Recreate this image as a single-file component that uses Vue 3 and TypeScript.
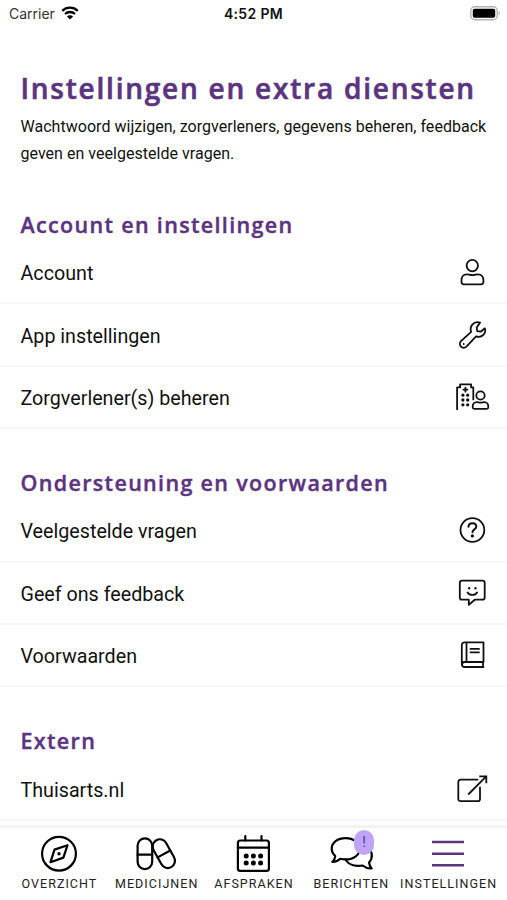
<script setup lang="ts">
interface Item {
  label: string
  icon: string
}
interface Section {
  title: string
  items: Item[]
}

const sections: Section[] = [
  {
    title: 'Account en instellingen',
    items: [
      { label: 'Account', icon: 'person' },
      { label: 'App instellingen', icon: 'wrench' },
      { label: 'Zorgverlener(s) beheren', icon: 'clinic' },
    ],
  },
  {
    title: 'Ondersteuning en voorwaarden',
    items: [
      { label: 'Veelgestelde vragen', icon: 'question' },
      { label: 'Geef ons feedback', icon: 'feedback' },
      { label: 'Voorwaarden', icon: 'book' },
    ],
  },
  {
    title: 'Extern',
    items: [{ label: 'Thuisarts.nl', icon: 'external' }],
  },
]

const tabs: Item[] = [
  { label: 'OVERZICHT', icon: 'compass' },
  { label: 'MEDICIJNEN', icon: 'pills' },
  { label: 'AFSPRAKEN', icon: 'calendar' },
  { label: 'BERICHTEN', icon: 'chat' },
  { label: 'INSTELLINGEN', icon: 'menu' },
]
</script>

<template>
  <div class="screen">
    <header class="status">
      <div class="carrier">
        <span>Carrier</span>
        <svg class="wifi" viewBox="0 0 18 14">
          <path d="M1.2 4.800a11.400 11.400 0 0 1 15.600 0M4 8a7.300 7.300 0 0 1 10 0" />
          <path class="solid" d="M9 13.600 5.900 10.500a4.400 4.400 0 0 1 6.200 0z" />
        </svg>
      </div>
      <div class="clock">4:52 PM</div>
      <svg class="battery" viewBox="0 0 31 15">
        <rect x="0.8" y="0.8" width="26.4" height="13" rx="4" fill="#fff" stroke="#b5b5b5" stroke-width="1.4" />
        <rect x="2.8" y="2.8" width="22.4" height="9" rx="1.8" fill="#000" />
        <path d="M28.600 5v4.600a2.600 2.600 0 0 0 0-4.600z" fill="#b5b5b5" />
      </svg>
    </header>

    <main class="content">
      <h1>Instellingen en extra diensten</h1>
      <p class="intro">
        Wachtwoord wijzigen, zorgverleners, gegevens beheren, feedback<br />geven en veelgestelde vragen.
      </p>

      <section v-for="section in sections" :key="section.title">
        <h2>{{ section.title }}</h2>
        <ul>
          <li v-for="item in section.items" :key="item.label">
            <span>{{ item.label }}</span>
            <svg class="icon" viewBox="-0.5 0 36 36">
              <g v-if="item.icon === 'person'">
                <circle cx="17.800" cy="11.600" r="5.700" />
                <path d="M12.200 20.300c2 0 3 .9 5.600.9s3.600-.9 5.600-.9c3.600 0 5.500 2.800 5.500 5.900v1.900a2.200 2.200 0 0 1-2.200 2.200H9.200A2.200 2.200 0 0 1 7 28.100V26.200c0-3.100 1.800-5.900 5.200-5.900z" />
              </g>
              <g v-else-if="item.icon === 'wrench'">
                <path d="M25.600 5.600c-3-1-6-.2-7.800 2-1.700 2-2 4.700-1.200 7.200L6.500 24.200c-1.500 1.500-1.500 3.900 0 5.400s3.900 1.500 5.400 0l9.700-10.200c2.300.8 4.900.4 6.800-1.200 2-1.700 2.800-4.400 2-6.900l-4.200 3.400-3.500-.6-.5-3.600z" />
                <path d="M9.200 26.900v.1" />
              </g>
              <g v-else-if="item.icon === 'clinic'">
                <path d="M2.600 30.300V8.400h3V5.300h11v3.100h2.200v12" />
                <path d="M10.900 8.700v4M8.900 10.700h4" />
                <path class="dots" d="M8.400 16.200v.01M13.200 16.200v.01M8.400 21v.01M13.200 21v.01M8.400 25.800v.01M13.200 25.800v.01" />
                <circle cx="26" cy="16.500" r="4.200" />
                <path d="M22.400 23.200c1.400 0 2 .5 3.600.5s2.200-.5 3.600-.5c2.600 0 4.200 2 4.200 4.200v.9c0 .9-.6 1.500-1.500 1.500H19.700c-.9 0-1.500-.6-1.500-1.500v-.9c0-2.200 1.600-4.200 4.200-4.200z" />
              </g>
              <g v-else-if="item.icon === 'question'">
                <circle cx="17.900" cy="18" r="11.900" />
                <path class="bold" d="M14 14.800c0-2.200 1.700-3.500 3.900-3.500s3.900 1.300 3.900 3.300c0 2.900-3.800 2.700-3.800 5.600" />
                <path class="dots" d="M17.900 23.900v.01" />
              </g>
              <g v-else-if="item.icon === 'feedback'">
                <path d="M7.500 5.700H28a2.200 2.200 0 0 1 2.200 2.200v14.600a2.200 2.200 0 0 1-2.200 2.200h-7.700l-6 5.100v-5.100H7.500a2.200 2.200 0 0 1-2.200-2.200V7.900a2.200 2.200 0 0 1 2.200-2.200z" />
                <path d="M13 17.400c2.200 3.400 7.400 3.400 9.600 0" />
                <path class="eyes" d="M14.700 13.200v.01M21 13.200v.01" />
              </g>
              <g v-else-if="item.icon === 'book'">
                <path d="M29 25V5.300H10A2.700 2.700 0 0 0 7.300 8v19.400M29 25H10a2.500 2.500 0 0 0 0 5h19M28.500 25v5M12 5.300V25" />
                <path d="M16 11.900h8.500M16 15.300h8.500" />
              </g>
              <g v-else>
                <path d="M23 8.700H6A2.200 2.200 0 0 0 3.800 10.900v17A2.200 2.200 0 0 0 6 30.100h17.300a2.200 2.200 0 0 0 2.200-2.200V16.500" />
                <path class="sharp" d="M13.700 23.500 31.500 5.600M24.800 5.400h7v6.800" />
              </g>
            </svg>
          </li>
        </ul>
      </section>
    </main>

    <nav class="tabs">
      <a v-for="tab in tabs" :key="tab.label" :class="['tab', tab.icon]">
        <svg viewBox="0 0 48 44">
          <g v-if="tab.icon === 'compass'">
            <circle cx="24" cy="21.700" r="16.900" />
            <path d="M32.500 13.200 19.500 17.600 15.500 30.200l12.900-4.600z" />
            <circle class="solid" cx="24" cy="21.700" r="1.700" />
          </g>
          <g v-else-if="tab.icon === 'pills'">
            <rect x="5.600" y="6.300" width="14.600" height="30.800" rx="7.300" />
            <path d="M5.600 22.700h14.600" />
            <g transform="rotate(-29 31.700 21.700)">
              <rect x="24.600" y="6.300" width="14.400" height="30.800" rx="7.200" />
              <path d="M24.600 22h14.400" />
            </g>
          </g>
          <g v-else-if="tab.icon === 'calendar'">
            <rect x="8.900" y="8.500" width="31" height="30.300" rx="2.400" />
            <path d="M8.900 15.700h31M16.300 4.200v4.300M32.500 4.200v4.300" />
            <path class="days" d="M17.200 24v.01M24.400 24v.01M31.600 24v.01M17.200 31v.01M24.400 31v.01M31.600 31v.01" />
          </g>
          <g v-else-if="tab.icon === 'chat'">
            <path d="M18.600 6.200C10.500 6.200 4.700 10.800 4.700 16.500c0 3 1.400 5.600 3.600 7.500-.2 2.400-1.300 4.300-3 5.800 3 .1 5.700-.7 7.900-3 1.700.5 3.500.6 5.400.6C26.600 27.400 33 22.600 33 16.800S26.600 6.200 18.600 6.200z" />
            <path d="M18.300 27.500c3.300 5.100 10.200 7.300 17.400 6 2.700 2.200 5.600 3.300 9 2.900-1.500-1.600-2.500-3.500-2.600-5.800 4-4.400 3.500-11-1-15" />
          </g>
          <g v-else>
            <path d="M8 10h32M8 21.700h32M8 33.200h32" />
          </g>
        </svg>
        <span v-if="tab.icon === 'chat'" class="badge">!</span>
        <span class="label">{{ tab.label }}</span>
      </a>
    </nav>
  </div>
</template>

<style>
body {
  margin: 0;
  background: #fff;
}
</style>

<style scoped>
.screen {
  display: flex;
  flex-direction: column;
  width: 507px;
  height: 900px;
  overflow: hidden;
  background: #fff;
  color: #111;
  font-family: Roboto, sans-serif;
}
.status {
  display: grid;
  grid-template-columns: 1fr auto 1fr;
  align-items: center;
  flex: none;
  height: 28px;
  padding: 0 6px 2px;
  box-sizing: border-box;
  font-family: Inter, sans-serif;
}
.carrier {
  display: flex;
  align-items: center;
  gap: 6px;
  padding-left: 3px;
  font-size: 14px;
  color: #333;
}
.wifi {
  width: 18px;
  height: 14px;
  fill: none;
  stroke: #000;
  stroke-width: 2.3;
}
.wifi .solid {
  fill: #000;
  stroke: none;
}
.clock {
  font-size: 14px;
  font-weight: 600;
  letter-spacing: 0.35px;
}
.battery {
  justify-self: end;
  width: 31px;
  height: 15px;
}
.content {
  flex: 1;
  min-height: 0;
  overflow: hidden;
}
h1,
h2 {
  margin: 0;
  color: #5b3480;
  font-family: "Open Sans", sans-serif;
  font-weight: 600;
  white-space: nowrap;
  stroke-linejoin: round;
  -webkit-text-stroke: 0.6px #5b3480;
}
h1 {
  padding: 41px 0 0 20.5px;
  font-size: 28px;
  line-height: 38px;
  letter-spacing: 1.77px;
}
.intro {
  margin: 6px 0 0;
  padding-left: 20.5px;
  font-size: 16px;
  line-height: 27px;
  letter-spacing: 0.03px;
  white-space: nowrap;
}
section {
  height: 258.2px;
}
h2 {
  padding: 42px 0 0 20.5px;
  font-size: 21.5px;
  line-height: 32px;
  letter-spacing: 1.33px;
  -webkit-text-stroke-width: 0.4px;
}
ul {
  margin: 0;
  padding: 1px 0 0;
  list-style: none;
}
li {
  display: flex;
  align-items: center;
  justify-content: space-between;
  box-sizing: border-box;
  height: 62.4px;
  padding: 3px 17px 0 20.5px;
  border-bottom: 2px solid #f6f6f6;
  font-size: 19.7px;
}
.icon {
  width: 36px;
  height: 36px;
  margin-bottom: 3px;
}
svg g {
  fill: none;
  stroke: #111;
  stroke-width: 1.8;
  stroke-linejoin: round;
  stroke-linecap: round;
}
.icon .dots {
  stroke-width: 3.3;
}
.icon .eyes {
  stroke-width: 2.4;
}
.icon .bold {
  stroke-width: 2;
}
.icon .sharp {
  stroke-linecap: butt;
  stroke-linejoin: miter;
}
.tabs {
  display: grid;
  grid-template-columns: repeat(5, 97.3px);
  justify-content: center;
  flex: none;
  height: 75px;
  box-sizing: border-box;
  border-top: 3px solid #f3f3f3;
  padding-top: 4px;
}
.tab {
  position: relative;
  display: flex;
  flex-direction: column;
  align-items: center;
}
.tab svg {
  flex: none;
  width: 48px;
  height: 44px;
}
.tab svg g {
  stroke: #000;
  stroke-width: 2.2;
}
.tab .solid {
  fill: #000;
  stroke: none;
}
.tab .days {
  stroke-width: 5;
}
.tab.menu svg g {
  stroke: #5b3480;
  stroke-width: 2.5;
  stroke-linecap: butt;
}
.label {
  font-size: 12.5px;
  line-height: 16px;
  letter-spacing: 1.03px;
  margin-right: -1px;
  white-space: nowrap;
  color: #222;
}
.badge {
  position: absolute;
  top: -2px;
  left: 52px;
  width: 20px;
  height: 25px;
  border-radius: 10px;
  background: #c0a4fa;
  color: #5b3480;
  font-size: 14px;
  line-height: 25px;
  text-align: center;
}
</style>
